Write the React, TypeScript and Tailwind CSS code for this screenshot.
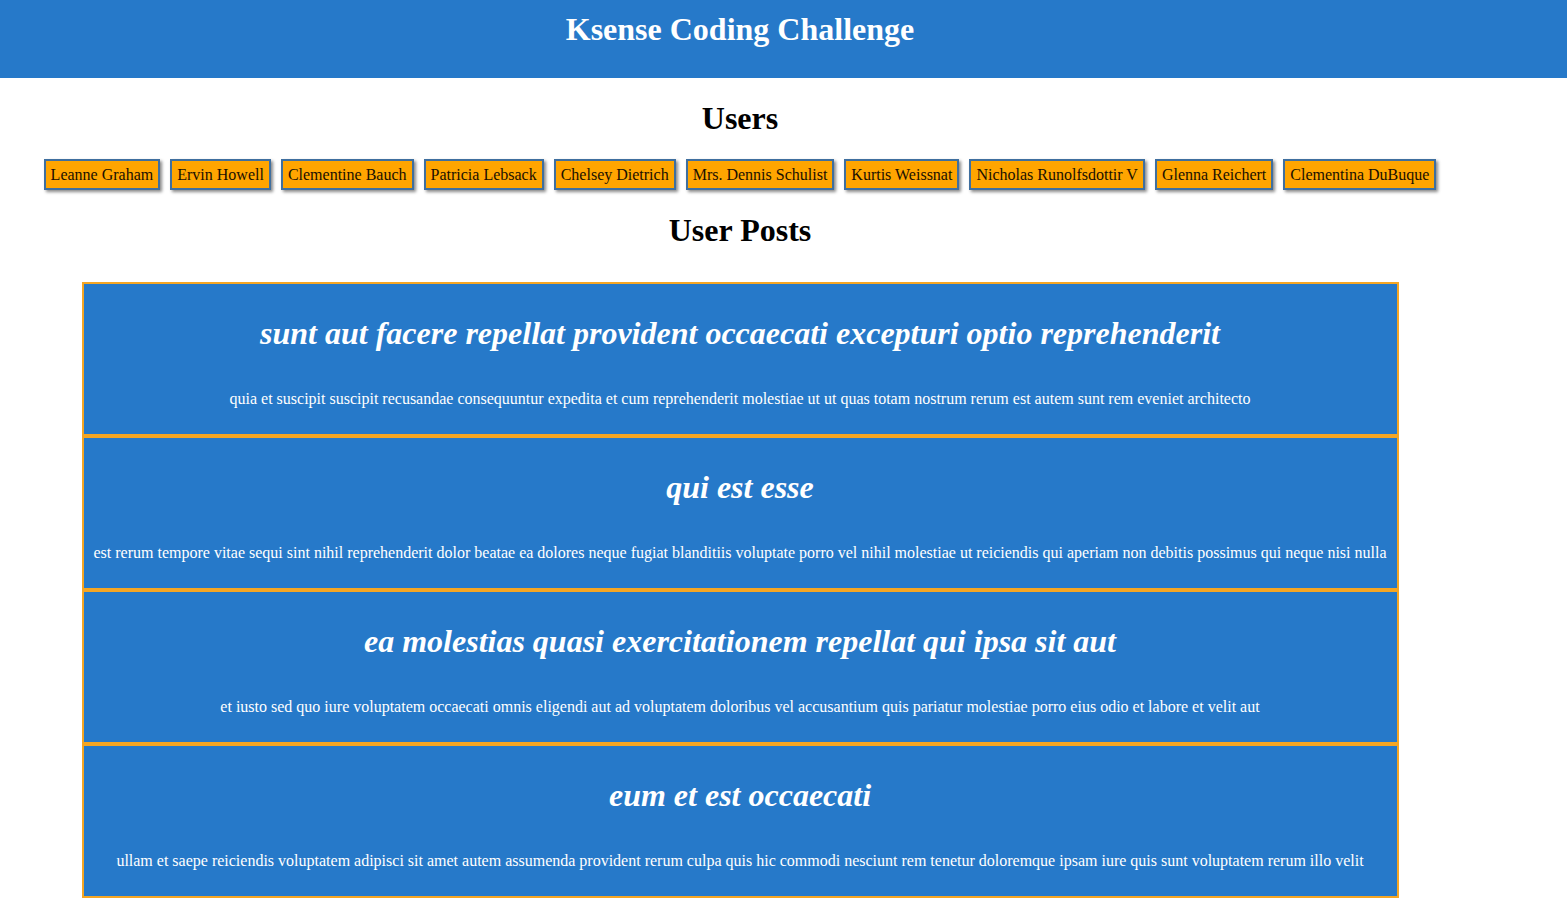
import React from 'react';

const users = [
  'Leanne Graham',
  'Ervin Howell',
  'Clementine Bauch',
  'Patricia Lebsack',
  'Chelsey Dietrich',
  'Mrs. Dennis Schulist',
  'Kurtis Weissnat',
  'Nicholas Runolfsdottir V',
  'Glenna Reichert',
  'Clementina DuBuque',
];

const posts = [
  {
    title: 'sunt aut facere repellat provident occaecati excepturi optio reprehenderit',
    body: 'quia et suscipit suscipit recusandae consequuntur expedita et cum reprehenderit molestiae ut ut quas totam nostrum rerum est autem sunt rem eveniet architecto',
  },
  {
    title: 'qui est esse',
    body: 'est rerum tempore vitae sequi sint nihil reprehenderit dolor beatae ea dolores neque fugiat blanditiis voluptate porro vel nihil molestiae ut reiciendis qui aperiam non debitis possimus qui neque nisi nulla',
  },
  {
    title: 'ea molestias quasi exercitationem repellat qui ipsa sit aut',
    body: 'et iusto sed quo iure voluptatem occaecati omnis eligendi aut ad voluptatem doloribus vel accusantium quis pariatur molestiae porro eius odio et labore et velit aut',
  },
  {
    title: 'eum et est occaecati',
    body: 'ullam et saepe reiciendis voluptatem adipisci sit amet autem assumenda provident rerum culpa quis hic commodi nesciunt rem tenetur doloremque ipsam iure quis sunt voluptatem rerum illo velit',
  },
];

const App: React.FC = () => {
  return (
    <div className="min-h-screen bg-white font-['Liberation_Serif',serif] text-black">
      <header className="h-[78px] bg-[#2679c9]">
        <h1 className="w-[1480px] pt-[11px] text-center text-[32px] leading-[37px] font-bold text-white">
          Ksense Coding Challenge
        </h1>
      </header>
      <div className="w-[1480px]">
        <h2 className="mt-[22px] text-center text-[32px] leading-[37px] font-bold">Users</h2>
        <div className="mt-[22px] flex flex-wrap justify-center gap-[10px]">
          {users.map((u) => (
            <button
              key={u}
              type="button"
              className="border-2 border-[#3f6f9f] bg-[#ffa500] px-[5px] py-[4px] text-[16px] leading-[19px] text-[#1a1000] shadow-[2px_2px_3px_#8a8a8a]"
            >
              {u}
            </button>
          ))}
        </div>
        <h2 className="mt-[22px] text-center text-[32px] leading-[37px] font-bold">User Posts</h2>
        <div className="mx-auto mt-[33px] w-[1317px]">
          {posts.map((p) => (
            <div key={p.title} className="border-2 border-[#f5a623] bg-[#2679c9] px-[9px] py-[10px] text-center text-white">
              <h3 className="mt-[21px] mb-[37px] text-[32px] leading-[37px] font-bold italic">{p.title}</h3>
              <p className="mb-4 text-[16px] leading-[19px]">{p.body}</p>
            </div>
          ))}
        </div>
      </div>
    </div>
  );
};

export default App;
